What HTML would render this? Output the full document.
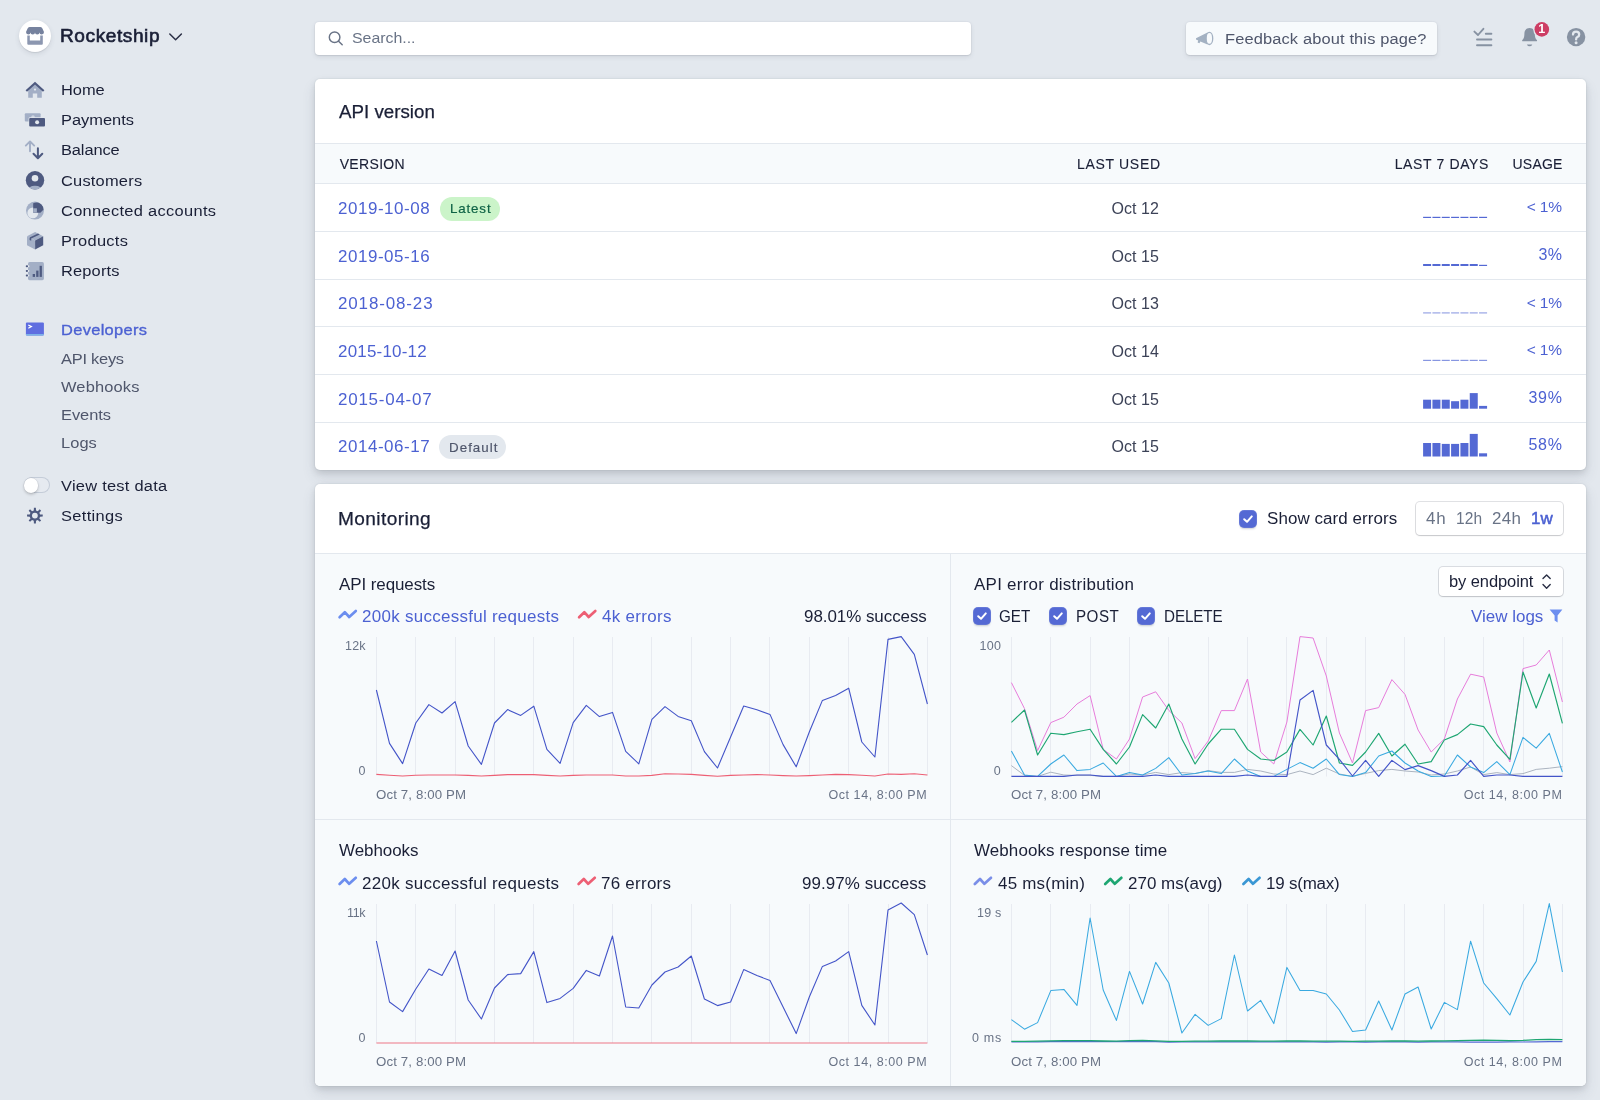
<!DOCTYPE html>
<html lang="en"><head><meta charset="utf-8"><title>Developers – Rocketship – Stripe</title>
<style>
*{box-sizing:border-box;margin:0;padding:0}
html,body{width:1600px;height:1100px;overflow:hidden;background:#e3e8ee;font-family:"Liberation Sans",sans-serif;-webkit-font-smoothing:antialiased}
.abs{position:absolute}
.overlay{position:absolute;left:0;top:0;pointer-events:none}
.t{position:absolute;white-space:nowrap;height:20px;line-height:20px}
.card{position:absolute;background:#fff;border-radius:5px;box-shadow:0 0 0 1px rgba(60,66,87,.04),0 7px 14px 0 rgba(60,66,87,.12),0 3px 6px 0 rgba(0,0,0,.10)}
.hl{position:absolute;height:1px;background:#e3e8ee}
.vl{position:absolute;width:1px;background:#e3e8ee}
.cb{position:absolute;width:16px;height:16px;border-radius:4px;background:#5469d4;box-shadow:0 0 0 1px rgba(84,105,212,.9),0 1.5px 2px rgba(60,66,87,.25)}
.cb svg{position:absolute;left:0;top:0}
.btn{position:absolute;background:#fff;border-radius:4px;box-shadow:0 0 0 1px rgba(60,66,87,.16),0 1px 1.5px rgba(0,0,0,.12)}
.pill{position:absolute;border-radius:12px}
</style></head><body>
<div class="abs" style="left:19px;top:20px;width:32px;height:32px;border-radius:16px;background:#fff;box-shadow:0 2px 5px rgba(60,66,87,.12),0 1px 1px rgba(0,0,0,.08)"></div>
<div class="abs" style="left:23.6px;top:477.4px;width:26.2px;height:15.8px;border-radius:8px;background:#e6eaf0;box-shadow:inset 0 0 0 1px #c4ccd8"></div>
<div class="abs" style="left:24px;top:478.2px;width:14.4px;height:14.4px;border-radius:8px;background:#fff;box-shadow:0 1.5px 3px rgba(0,0,0,.2),0 0 0 .5px rgba(60,66,87,.10)"></div>
<div class="abs" style="left:315px;top:22px;width:656px;height:33px;border-radius:4px;background:#fff;box-shadow:0 0 0 1px rgba(60,66,87,.03),0 2px 5px rgba(60,66,87,.10),0 1px 1.5px rgba(0,0,0,.08)"></div>
<div class="abs" style="left:1186px;top:22px;width:251px;height:33px;border-radius:4px;background:#f7fafc;box-shadow:0 0 0 1px rgba(60,66,87,.03),0 2px 5px rgba(60,66,87,.10),0 1px 1.5px rgba(0,0,0,.08)"></div>
<div class="card" style="left:315px;top:78.6px;width:1270.6px;height:391px;overflow:hidden">
<div class="abs" style="left:0;top:64.6px;width:1271px;height:41px;background:#f7fafc"></div>
<div class="hl" style="left:0;top:64.4px;width:1271px"></div>
<div class="hl" style="left:0;top:104.6px;width:1271px"></div>
<div class="hl" style="left:0;top:152.3px;width:1271px"></div>
<div class="hl" style="left:0;top:200.1px;width:1271px"></div>
<div class="hl" style="left:0;top:247.8px;width:1271px"></div>
<div class="hl" style="left:0;top:295.6px;width:1271px"></div>
<div class="hl" style="left:0;top:343.4px;width:1271px"></div>
</div>
<div class="pill" style="left:439.7px;top:196.9px;width:60.4px;height:23.8px;background:#cbf4c9"></div>
<div class="pill" style="left:438.6px;top:435.2px;width:67.2px;height:23.8px;background:#e3e8ee"></div>
<div class="card" style="left:315px;top:483.6px;width:1270.6px;height:602.4px;overflow:hidden">
<div class="abs" style="left:0;top:69px;width:1271px;height:534px;background:#f7fafc"></div>
<div class="hl" style="left:0;top:69px;width:1271px"></div>
<div class="hl" style="left:0;top:335.2px;width:1271px"></div>
<div class="vl" style="left:634.6px;top:69px;height:534px"></div>
</div>
<div class="btn" style="left:1415.5px;top:502px;width:147.5px;height:32.6px"></div>
<div class="btn" style="left:1439px;top:567px;width:124px;height:28.8px"></div>
<div class="cb" style="left:1240.4px;top:510.6px"><svg width="16" height="16" viewBox="0 0 16 16"><polyline points="4.2,8.2 7,10.8 11.8,5.4" fill="none" stroke="#fff" stroke-width="2" stroke-linecap="round" stroke-linejoin="round"/></svg></div>
<div class="cb" style="left:974px;top:608.3px"><svg width="16" height="16" viewBox="0 0 16 16"><polyline points="4.2,8.2 7,10.8 11.8,5.4" fill="none" stroke="#fff" stroke-width="2" stroke-linecap="round" stroke-linejoin="round"/></svg></div>
<div class="cb" style="left:1049.8px;top:608.3px"><svg width="16" height="16" viewBox="0 0 16 16"><polyline points="4.2,8.2 7,10.8 11.8,5.4" fill="none" stroke="#fff" stroke-width="2" stroke-linecap="round" stroke-linejoin="round"/></svg></div>
<div class="cb" style="left:1138.2px;top:608.3px"><svg width="16" height="16" viewBox="0 0 16 16"><polyline points="4.2,8.2 7,10.8 11.8,5.4" fill="none" stroke="#fff" stroke-width="2" stroke-linecap="round" stroke-linejoin="round"/></svg></div>
<svg class="overlay" width="1600" height="1100" viewBox="0 0 1600 1100">
<line x1="376.5" y1="637" x2="376.5" y2="775.5" stroke="#e8ebf1" stroke-width="1"/>
<line x1="415.5" y1="637" x2="415.5" y2="775.5" stroke="#e8ebf1" stroke-width="1"/>
<line x1="455.5" y1="637" x2="455.5" y2="775.5" stroke="#e8ebf1" stroke-width="1"/>
<line x1="494.5" y1="637" x2="494.5" y2="775.5" stroke="#e8ebf1" stroke-width="1"/>
<line x1="533.5" y1="637" x2="533.5" y2="775.5" stroke="#e8ebf1" stroke-width="1"/>
<line x1="573.5" y1="637" x2="573.5" y2="775.5" stroke="#e8ebf1" stroke-width="1"/>
<line x1="612.5" y1="637" x2="612.5" y2="775.5" stroke="#e8ebf1" stroke-width="1"/>
<line x1="651.5" y1="637" x2="651.5" y2="775.5" stroke="#e8ebf1" stroke-width="1"/>
<line x1="691.5" y1="637" x2="691.5" y2="775.5" stroke="#e8ebf1" stroke-width="1"/>
<line x1="730.5" y1="637" x2="730.5" y2="775.5" stroke="#e8ebf1" stroke-width="1"/>
<line x1="769.5" y1="637" x2="769.5" y2="775.5" stroke="#e8ebf1" stroke-width="1"/>
<line x1="809.5" y1="637" x2="809.5" y2="775.5" stroke="#e8ebf1" stroke-width="1"/>
<line x1="848.5" y1="637" x2="848.5" y2="775.5" stroke="#e8ebf1" stroke-width="1"/>
<line x1="888.5" y1="637" x2="888.5" y2="775.5" stroke="#e8ebf1" stroke-width="1"/>
<line x1="927.5" y1="637" x2="927.5" y2="775.5" stroke="#e8ebf1" stroke-width="1"/>
<line x1="1011.5" y1="637" x2="1011.5" y2="776.5" stroke="#e8ebf1" stroke-width="1"/>
<line x1="1050.5" y1="637" x2="1050.5" y2="776.5" stroke="#e8ebf1" stroke-width="1"/>
<line x1="1090.5" y1="637" x2="1090.5" y2="776.5" stroke="#e8ebf1" stroke-width="1"/>
<line x1="1129.5" y1="637" x2="1129.5" y2="776.5" stroke="#e8ebf1" stroke-width="1"/>
<line x1="1168.5" y1="637" x2="1168.5" y2="776.5" stroke="#e8ebf1" stroke-width="1"/>
<line x1="1208.5" y1="637" x2="1208.5" y2="776.5" stroke="#e8ebf1" stroke-width="1"/>
<line x1="1247.5" y1="637" x2="1247.5" y2="776.5" stroke="#e8ebf1" stroke-width="1"/>
<line x1="1286.5" y1="637" x2="1286.5" y2="776.5" stroke="#e8ebf1" stroke-width="1"/>
<line x1="1326.5" y1="637" x2="1326.5" y2="776.5" stroke="#e8ebf1" stroke-width="1"/>
<line x1="1365.5" y1="637" x2="1365.5" y2="776.5" stroke="#e8ebf1" stroke-width="1"/>
<line x1="1404.5" y1="637" x2="1404.5" y2="776.5" stroke="#e8ebf1" stroke-width="1"/>
<line x1="1444.5" y1="637" x2="1444.5" y2="776.5" stroke="#e8ebf1" stroke-width="1"/>
<line x1="1483.5" y1="637" x2="1483.5" y2="776.5" stroke="#e8ebf1" stroke-width="1"/>
<line x1="1523.5" y1="637" x2="1523.5" y2="776.5" stroke="#e8ebf1" stroke-width="1"/>
<line x1="1562.5" y1="637" x2="1562.5" y2="776.5" stroke="#e8ebf1" stroke-width="1"/>
<line x1="376.5" y1="904" x2="376.5" y2="1043" stroke="#e8ebf1" stroke-width="1"/>
<line x1="415.5" y1="904" x2="415.5" y2="1043" stroke="#e8ebf1" stroke-width="1"/>
<line x1="455.5" y1="904" x2="455.5" y2="1043" stroke="#e8ebf1" stroke-width="1"/>
<line x1="494.5" y1="904" x2="494.5" y2="1043" stroke="#e8ebf1" stroke-width="1"/>
<line x1="533.5" y1="904" x2="533.5" y2="1043" stroke="#e8ebf1" stroke-width="1"/>
<line x1="573.5" y1="904" x2="573.5" y2="1043" stroke="#e8ebf1" stroke-width="1"/>
<line x1="612.5" y1="904" x2="612.5" y2="1043" stroke="#e8ebf1" stroke-width="1"/>
<line x1="651.5" y1="904" x2="651.5" y2="1043" stroke="#e8ebf1" stroke-width="1"/>
<line x1="691.5" y1="904" x2="691.5" y2="1043" stroke="#e8ebf1" stroke-width="1"/>
<line x1="730.5" y1="904" x2="730.5" y2="1043" stroke="#e8ebf1" stroke-width="1"/>
<line x1="769.5" y1="904" x2="769.5" y2="1043" stroke="#e8ebf1" stroke-width="1"/>
<line x1="809.5" y1="904" x2="809.5" y2="1043" stroke="#e8ebf1" stroke-width="1"/>
<line x1="848.5" y1="904" x2="848.5" y2="1043" stroke="#e8ebf1" stroke-width="1"/>
<line x1="888.5" y1="904" x2="888.5" y2="1043" stroke="#e8ebf1" stroke-width="1"/>
<line x1="927.5" y1="904" x2="927.5" y2="1043" stroke="#e8ebf1" stroke-width="1"/>
<line x1="1011.5" y1="904" x2="1011.5" y2="1041.5" stroke="#e8ebf1" stroke-width="1"/>
<line x1="1050.5" y1="904" x2="1050.5" y2="1041.5" stroke="#e8ebf1" stroke-width="1"/>
<line x1="1090.5" y1="904" x2="1090.5" y2="1041.5" stroke="#e8ebf1" stroke-width="1"/>
<line x1="1129.5" y1="904" x2="1129.5" y2="1041.5" stroke="#e8ebf1" stroke-width="1"/>
<line x1="1168.5" y1="904" x2="1168.5" y2="1041.5" stroke="#e8ebf1" stroke-width="1"/>
<line x1="1208.5" y1="904" x2="1208.5" y2="1041.5" stroke="#e8ebf1" stroke-width="1"/>
<line x1="1247.5" y1="904" x2="1247.5" y2="1041.5" stroke="#e8ebf1" stroke-width="1"/>
<line x1="1286.5" y1="904" x2="1286.5" y2="1041.5" stroke="#e8ebf1" stroke-width="1"/>
<line x1="1326.5" y1="904" x2="1326.5" y2="1041.5" stroke="#e8ebf1" stroke-width="1"/>
<line x1="1365.5" y1="904" x2="1365.5" y2="1041.5" stroke="#e8ebf1" stroke-width="1"/>
<line x1="1404.5" y1="904" x2="1404.5" y2="1041.5" stroke="#e8ebf1" stroke-width="1"/>
<line x1="1444.5" y1="904" x2="1444.5" y2="1041.5" stroke="#e8ebf1" stroke-width="1"/>
<line x1="1483.5" y1="904" x2="1483.5" y2="1041.5" stroke="#e8ebf1" stroke-width="1"/>
<line x1="1523.5" y1="904" x2="1523.5" y2="1041.5" stroke="#e8ebf1" stroke-width="1"/>
<line x1="1562.5" y1="904" x2="1562.5" y2="1041.5" stroke="#e8ebf1" stroke-width="1"/>
<polyline points="376.4,690.0 389.5,743.4 402.6,763.6 415.8,723.0 428.9,704.6 442.0,713.0 455.1,701.6 468.2,746.0 481.4,764.4 494.5,723.0 507.6,709.6 520.7,715.4 533.8,706.2 546.9,749.4 560.1,763.4 573.2,722.6 586.3,705.4 599.4,716.6 612.5,712.4 625.7,751.4 638.8,763.8 651.9,719.4 665.0,706.6 678.1,716.4 691.3,720.8 704.4,751.6 717.5,768.0 730.6,737.0 743.7,706.0 756.9,709.8 770.0,714.4 783.1,744.6 796.2,766.8 809.3,732.0 822.4,700.4 835.6,695.4 848.7,688.2 861.8,742.0 874.9,757.0 888.0,639.4 901.2,636.6 914.3,654.4 927.4,704.0" fill="none" stroke="#4354c8" stroke-width="1.1" stroke-linejoin="round" />
<polyline points="376.4,774.4 389.5,775.2 402.6,776.0 415.8,775.2 428.9,775.0 442.0,775.0 455.1,775.0 468.2,775.4 481.4,776.0 494.5,775.4 507.6,774.6 520.7,774.6 533.8,774.6 546.9,775.4 560.1,776.0 573.2,775.4 586.3,775.0 599.4,775.0 612.5,775.0 625.7,776.0 638.8,776.0 651.9,775.4 665.0,773.8 678.1,774.0 691.3,774.4 704.4,775.4 717.5,776.2 730.6,775.4 743.7,775.0 756.9,774.6 770.0,775.0 783.1,775.6 796.2,776.0 809.3,775.6 822.4,775.0 835.6,774.4 848.7,774.6 861.8,775.2 874.9,776.0 888.0,774.0 901.2,774.4 914.3,773.8 927.4,775.0" fill="none" stroke="#ed5f74" stroke-width="1.1" stroke-linejoin="round" />
<polyline points="1011.4,765.6 1024.5,775.4 1037.6,776.4 1050.8,772.2 1063.9,775.0 1077.0,775.4 1090.1,775.4 1103.2,776.4 1116.4,776.4 1129.5,774.0 1142.6,775.0 1155.7,772.4 1168.8,774.6 1181.9,772.6 1195.1,773.6 1208.2,770.6 1221.3,772.4 1234.4,772.4 1247.5,769.4 1260.7,771.0 1273.8,774.0 1286.9,774.6 1300.0,771.0 1313.1,774.6 1326.3,768.2 1339.4,774.0 1352.5,776.4 1365.6,773.4 1378.7,770.6 1391.9,769.4 1405.0,771.0 1418.1,772.0 1431.2,775.0 1444.3,774.0 1457.4,771.0 1470.6,767.0 1483.7,774.6 1496.8,772.6 1509.9,774.6 1523.0,773.6 1536.2,769.4 1549.3,768.2 1562.4,766.6" fill="none" stroke="#a3acb9" stroke-width="0.9" stroke-linejoin="round" />
<polyline points="1011.4,682.6 1024.5,708.6 1037.6,750.6 1050.8,722.6 1063.9,717.2 1077.0,704.0 1090.1,695.6 1103.2,749.4 1116.4,759.0 1129.5,739.0 1142.6,697.0 1155.7,691.8 1168.8,710.4 1181.9,723.0 1195.1,758.6 1208.2,741.0 1221.3,710.6 1234.4,710.6 1247.5,679.0 1260.7,752.0 1273.8,764.0 1286.9,722.0 1300.0,636.6 1313.1,638.0 1326.3,676.0 1339.4,733.0 1352.5,763.0 1365.6,710.6 1378.7,707.6 1391.9,679.6 1405.0,694.4 1418.1,730.0 1431.2,752.0 1444.3,739.0 1457.4,699.0 1470.6,674.2 1483.7,677.0 1496.8,733.0 1509.9,762.0 1523.0,668.6 1536.2,665.0 1549.3,650.0 1562.4,702.0" fill="none" stroke="#e77ddb" stroke-width="1.0" stroke-linejoin="round" />
<polyline points="1011.4,722.4 1024.5,710.0 1037.6,755.0 1050.8,733.2 1063.9,734.6 1077.0,731.8 1090.1,729.2 1103.2,749.4 1116.4,764.0 1129.5,747.0 1142.6,714.6 1155.7,728.0 1168.8,704.0 1181.9,739.0 1195.1,764.0 1208.2,744.0 1221.3,729.2 1234.4,729.2 1247.5,749.4 1260.7,759.0 1273.8,760.4 1286.9,752.0 1300.0,729.4 1313.1,745.0 1326.3,716.0 1339.4,763.0 1352.5,765.4 1365.6,752.0 1378.7,733.4 1391.9,756.0 1405.0,744.2 1418.1,764.0 1431.2,761.6 1444.3,740.0 1457.4,734.6 1470.6,724.0 1483.7,726.6 1496.8,745.0 1509.9,759.4 1523.0,672.0 1536.2,708.0 1549.3,674.0 1562.4,723.4" fill="none" stroke="#1ea672" stroke-width="1.15" stroke-linejoin="round" />
<polyline points="1011.4,751.0 1024.5,775.0 1037.6,776.4 1050.8,764.0 1063.9,755.0 1077.0,770.6 1090.1,769.4 1103.2,763.0 1116.4,776.4 1129.5,772.4 1142.6,775.0 1155.7,768.4 1168.8,757.6 1181.9,775.0 1195.1,773.6 1208.2,771.0 1221.3,773.6 1234.4,759.0 1247.5,771.0 1260.7,776.4 1273.8,776.4 1286.9,769.4 1300.0,762.6 1313.1,768.2 1326.3,759.0 1339.4,774.6 1352.5,776.4 1365.6,772.6 1378.7,756.0 1391.9,751.0 1405.0,763.0 1418.1,771.0 1431.2,776.4 1444.3,776.0 1457.4,755.0 1470.6,767.0 1483.7,772.6 1496.8,761.6 1509.9,774.6 1523.0,737.4 1536.2,748.2 1549.3,733.4 1562.4,772.0" fill="none" stroke="#39a9e0" stroke-width="1.05" stroke-linejoin="round" />
<polyline points="1011.4,776.4 1024.5,776.4 1037.6,776.4 1050.8,776.4 1063.9,776.4 1077.0,775.0 1090.1,775.0 1103.2,776.4 1116.4,776.4 1129.5,776.4 1142.6,776.4 1155.7,775.0 1168.8,776.4 1181.9,776.4 1195.1,776.4 1208.2,776.4 1221.3,776.4 1234.4,776.4 1247.5,775.0 1260.7,776.4 1273.8,776.4 1286.9,776.4 1300.0,700.0 1313.1,690.4 1326.3,745.0 1339.4,759.4 1352.5,776.0 1365.6,760.4 1378.7,776.4 1391.9,760.4 1405.0,769.6 1418.1,765.6 1431.2,770.6 1444.3,776.4 1457.4,775.0 1470.6,760.4 1483.7,776.4 1496.8,775.0 1509.9,775.0 1523.0,776.4 1536.2,776.4 1549.3,776.4 1562.4,776.4" fill="none" stroke="#4354c8" stroke-width="1.15" stroke-linejoin="round" />
<polyline points="376.4,941.0 389.5,1002.0 402.6,1011.6 415.8,989.0 428.9,969.0 442.0,975.4 455.1,951.0 468.2,1000.0 481.4,1019.0 494.5,988.0 507.6,974.6 520.7,973.6 533.8,951.6 546.9,1002.6 560.1,998.4 573.2,988.4 586.3,970.4 599.4,976.0 612.5,936.0 625.7,1007.0 638.8,1008.0 651.9,985.0 665.0,972.0 678.1,967.0 691.3,956.0 704.4,999.0 717.5,1005.6 730.6,1002.0 743.7,969.6 756.9,975.6 770.0,980.4 783.1,1007.0 796.2,1033.6 809.3,997.0 822.4,966.4 835.6,961.0 848.7,951.6 861.8,1005.4 874.9,1025.0 888.0,910.0 901.2,903.0 914.3,914.6 927.4,955.0" fill="none" stroke="#4354c8" stroke-width="1.1" stroke-linejoin="round" />
<polyline points="376.4,1043.0 389.5,1043.0 402.6,1043.0 415.8,1043.0 428.9,1043.0 442.0,1043.0 455.1,1043.0 468.2,1043.0 481.4,1043.0 494.5,1043.0 507.6,1043.0 520.7,1043.0 533.8,1043.0 546.9,1043.0 560.1,1043.0 573.2,1043.0 586.3,1043.0 599.4,1043.0 612.5,1043.0 625.7,1043.0 638.8,1043.0 651.9,1043.0 665.0,1043.0 678.1,1043.0 691.3,1043.0 704.4,1043.0 717.5,1043.0 730.6,1043.0 743.7,1043.0 756.9,1043.0 770.0,1043.0 783.1,1043.0 796.2,1043.0 809.3,1043.0 822.4,1043.0 835.6,1043.0 848.7,1043.0 861.8,1043.0 874.9,1043.0 888.0,1043.0 901.2,1043.0 914.3,1043.0 927.4,1043.0" fill="none" stroke="#ee7686" stroke-width="1.2" stroke-linejoin="round" />
<polyline points="1011.4,1019.6 1024.5,1029.2 1037.6,1022.6 1050.8,990.6 1063.9,989.4 1077.0,1005.4 1090.1,918.0 1103.2,990.0 1116.4,1020.4 1129.5,971.4 1142.6,1004.0 1155.7,962.4 1168.8,983.0 1181.9,1033.0 1195.1,1014.4 1208.2,1025.4 1221.3,1018.6 1234.4,955.0 1247.5,1011.0 1260.7,1000.4 1273.8,1023.6 1286.9,967.4 1300.0,990.4 1313.1,990.4 1326.3,994.0 1339.4,1010.0 1352.5,1031.4 1365.6,1030.0 1378.7,1001.0 1391.9,1030.0 1405.0,994.0 1418.1,987.0 1431.2,1029.0 1444.3,1002.4 1457.4,1009.6 1470.6,941.2 1483.7,983.0 1496.8,998.6 1509.9,1015.0 1523.0,982.0 1536.2,961.4 1549.3,903.6 1562.4,972.0" fill="none" stroke="#39a9e0" stroke-width="1.05" stroke-linejoin="round" />
<polyline points="1011.4,1041.8 1024.5,1041.8 1037.6,1041.8 1050.8,1041.6 1063.9,1041.6 1077.0,1041.6 1090.1,1041.6 1103.2,1041.6 1116.4,1041.6 1129.5,1041.6 1142.6,1041.6 1155.7,1041.6 1168.8,1042.2 1181.9,1042.0 1195.1,1041.8 1208.2,1041.8 1221.3,1041.8 1234.4,1041.8 1247.5,1041.8 1260.7,1041.8 1273.8,1041.8 1286.9,1041.8 1300.0,1041.8 1313.1,1041.8 1326.3,1042.2 1339.4,1041.8 1352.5,1041.8 1365.6,1042.2 1378.7,1041.8 1391.9,1041.8 1405.0,1041.8 1418.1,1042.2 1431.2,1041.8 1444.3,1041.8 1457.4,1041.8 1470.6,1042.2 1483.7,1042.2 1496.8,1042.2 1509.9,1041.8 1523.0,1042.0 1536.2,1041.8 1549.3,1041.6 1562.4,1041.6" fill="none" stroke="#5469d4" stroke-width="1.2" stroke-linejoin="round" />
<polyline points="1011.4,1041.4 1024.5,1041.4 1037.6,1041.2 1050.8,1040.8 1063.9,1040.6 1077.0,1040.6 1090.1,1040.6 1103.2,1041.0 1116.4,1041.2 1129.5,1040.6 1142.6,1040.4 1155.7,1040.8 1168.8,1041.4 1181.9,1041.4 1195.1,1041.2 1208.2,1041.2 1221.3,1041.0 1234.4,1041.0 1247.5,1041.0 1260.7,1041.2 1273.8,1041.2 1286.9,1041.0 1300.0,1041.0 1313.1,1041.2 1326.3,1041.2 1339.4,1041.2 1352.5,1041.4 1365.6,1041.2 1378.7,1041.2 1391.9,1041.0 1405.0,1041.0 1418.1,1041.2 1431.2,1041.0 1444.3,1040.8 1457.4,1040.6 1470.6,1040.4 1483.7,1040.2 1496.8,1040.4 1509.9,1040.6 1523.0,1040.4 1536.2,1039.6 1549.3,1039.4 1562.4,1039.6" fill="none" stroke="#1ea672" stroke-width="1.3" stroke-linejoin="round" />
<rect x="1423.10" y="216.80" width="8" height="1.20" fill="#5469d4" opacity="1"/>
<rect x="1432.43" y="216.80" width="8" height="1.20" fill="#5469d4" opacity="1"/>
<rect x="1441.76" y="216.80" width="8" height="1.20" fill="#5469d4" opacity="1"/>
<rect x="1451.09" y="216.80" width="8" height="1.20" fill="#5469d4" opacity="1"/>
<rect x="1460.42" y="216.80" width="8" height="1.20" fill="#5469d4" opacity="1"/>
<rect x="1469.75" y="216.80" width="8" height="1.20" fill="#5469d4" opacity="1"/>
<rect x="1479.08" y="216.80" width="8" height="1.20" fill="#5469d4" opacity="1"/>
<rect x="1423.10" y="264.00" width="8" height="2.00" fill="#5469d4" opacity="1"/>
<rect x="1432.43" y="264.00" width="8" height="2.00" fill="#5469d4" opacity="1"/>
<rect x="1441.76" y="264.00" width="8" height="2.00" fill="#5469d4" opacity="1"/>
<rect x="1451.09" y="264.00" width="8" height="2.00" fill="#5469d4" opacity="1"/>
<rect x="1460.42" y="264.00" width="8" height="2.00" fill="#5469d4" opacity="1"/>
<rect x="1469.75" y="264.00" width="8" height="2.00" fill="#5469d4" opacity="1"/>
<rect x="1479.08" y="264.80" width="8" height="1.20" fill="#5469d4" opacity="1"/>
<rect x="1423.10" y="312.30" width="8" height="1.20" fill="#5469d4" opacity="0.6"/>
<rect x="1432.43" y="312.30" width="8" height="1.20" fill="#5469d4" opacity="0.6"/>
<rect x="1441.76" y="312.30" width="8" height="1.20" fill="#5469d4" opacity="0.6"/>
<rect x="1451.09" y="312.30" width="8" height="1.20" fill="#5469d4" opacity="0.6"/>
<rect x="1460.42" y="312.30" width="8" height="1.20" fill="#5469d4" opacity="0.6"/>
<rect x="1469.75" y="312.30" width="8" height="1.20" fill="#5469d4" opacity="0.6"/>
<rect x="1479.08" y="312.30" width="8" height="1.20" fill="#5469d4" opacity="0.6"/>
<rect x="1423.10" y="359.80" width="8" height="1.20" fill="#5469d4" opacity="0.7"/>
<rect x="1432.43" y="359.80" width="8" height="1.20" fill="#5469d4" opacity="0.7"/>
<rect x="1441.76" y="359.80" width="8" height="1.20" fill="#5469d4" opacity="0.7"/>
<rect x="1451.09" y="359.80" width="8" height="1.20" fill="#5469d4" opacity="0.7"/>
<rect x="1460.42" y="359.80" width="8" height="1.20" fill="#5469d4" opacity="0.7"/>
<rect x="1469.75" y="359.80" width="8" height="1.20" fill="#5469d4" opacity="0.7"/>
<rect x="1479.08" y="359.80" width="8" height="1.20" fill="#5469d4" opacity="0.7"/>
<rect x="1423.10" y="399.70" width="8" height="9.00" fill="#5469d4" opacity="1"/>
<rect x="1432.43" y="399.70" width="8" height="9.00" fill="#5469d4" opacity="1"/>
<rect x="1441.76" y="399.70" width="8" height="9.00" fill="#5469d4" opacity="1"/>
<rect x="1451.09" y="401.20" width="8" height="7.50" fill="#5469d4" opacity="1"/>
<rect x="1460.42" y="399.70" width="8" height="9.00" fill="#5469d4" opacity="1"/>
<rect x="1469.75" y="393.10" width="8" height="15.60" fill="#5469d4" opacity="1"/>
<rect x="1479.08" y="405.90" width="8" height="2.80" fill="#5469d4" opacity="1"/>
<rect x="1423.10" y="443.00" width="8" height="13.50" fill="#5469d4" opacity="1"/>
<rect x="1432.43" y="443.00" width="8" height="13.50" fill="#5469d4" opacity="1"/>
<rect x="1441.76" y="443.90" width="8" height="12.60" fill="#5469d4" opacity="1"/>
<rect x="1451.09" y="443.90" width="8" height="12.60" fill="#5469d4" opacity="1"/>
<rect x="1460.42" y="443.00" width="8" height="13.50" fill="#5469d4" opacity="1"/>
<rect x="1469.75" y="433.90" width="8" height="22.60" fill="#5469d4" opacity="1"/>
<rect x="1479.08" y="453.30" width="8" height="3.20" fill="#5469d4" opacity="1"/>
</svg>
<svg class="overlay" width="1600" height="1100" viewBox="0 0 1600 1100">
<defs><clipPath id="cc"><circle cx="35" cy="180.3" r="9.2"/></clipPath><clipPath id="ca"><circle cx="35" cy="210.6" r="9"/></clipPath></defs>
<path d="M27.6,28.4 Q28,26.9 29.6,26.9 H40.4 Q42,26.9 42.4,28.4 L44,32 Q44,34.4 41.75,34.4 Q39.5,34.4 39.5,32.4 Q39.5,34.4 37.25,34.4 Q35,34.4 35,32.4 Q35,34.4 32.75,34.4 Q30.5,34.4 30.5,32.4 Q30.5,34.4 28.25,34.4 Q26,34.4 26,32Z" fill="#76829e"/><path d="M27.3,35.6 H29.8 V40.6 H40.2 V35.6 H42.8 V43.8 Q42.8,44.8 41.8,44.8 H28.3 Q27.3,44.8 27.3,43.8Z" fill="#8c97b0"/>
<polyline points="169.8,34 175.6,39.8 181.4,34" fill="none" stroke="#2a2f45" stroke-width="1.5" stroke-linecap="round" stroke-linejoin="round"/>
<path d="M28.2,97.8 V89.6 L35,84.2 L41.8,89.6 V97.8 H37.2 V93.4 H32.8 V97.8Z" fill="#a3afc6"/>
<circle cx="35" cy="89.6" r="1.1" fill="#e3e8ee"/>
<polyline points="26.3,91 35,83.2 43.7,91" fill="none" stroke="#4e5a80" stroke-width="2.1" stroke-linejoin="miter"/>
<rect x="24.8" y="113.2" width="15.8" height="8.4" rx="1" fill="#a3afc6"/>
<circle cx="33" cy="117" r="1.8" fill="#e3e8ee" opacity="0.7"/>
<rect x="28.6" y="117.3" width="17" height="9.8" rx="1.4" fill="#e3e8ee"/>
<rect x="29.2" y="117.9" width="15.8" height="8.6" rx="1" fill="#4e5a80"/>
<circle cx="37.1" cy="122.2" r="2" fill="#e3e8ee"/>
<g fill="none" stroke-linecap="round" stroke-linejoin="round"><path d="M30,151.2 V141.6 M25.8,145.6 L30,141.4 L34.2,145.6" stroke="#a3afc6" stroke-width="1.9"/><path d="M37.9,148.2 V158 M33.5,153.8 L37.9,158.2 L42.3,153.8" stroke="#4e5a80" stroke-width="2"/></g>
<circle cx="35" cy="180.3" r="9.2" fill="#4e5a80"/>
<ellipse cx="35" cy="190.6" rx="7.6" ry="4.8" fill="#a3afc6" clip-path="url(#cc)"/>
<circle cx="35" cy="178.2" r="3.3" fill="#e3e8ee"/>
<circle cx="35" cy="210.6" r="9" fill="#a3afc6"/>
<circle cx="32.8" cy="212.9" r="5.4" fill="#e3e8ee"/>
<path d="M33.2,203.2 A7.2,7.2 0 0 1 43.6,209.6 L40.4,212.8 H33.2Z" fill="#4e5a80" clip-path="url(#ca)"/>
<rect x="33.2" y="208.3" width="3.7" height="4.3" fill="#a3afc6"/>
<polygon points="35.1,232.1 43.2,236.2 35.1,240.4 27,236.2" fill="#a3afc6"/>
<polygon points="27,236.2 35.1,240.4 35.1,249.4 27,245.2" fill="#a3afc6"/>
<polygon points="43.2,236.2 35.1,240.4 35.1,249.4 43.2,245.2" fill="#4e5a80"/>
<polygon points="29.6,237.6 38,233.6 39.8,234.5 31.2,238.6 31.2,240.8 29.6,240" fill="#4e5a80"/>
<rect x="28" y="262.1" width="15.9" height="18.1" rx="1.6" fill="#a3afc6"/>
<rect x="25.8" y="265.2" width="3.6" height="2" rx="0.8" fill="#e3e8ee"/><rect x="25.8" y="265.2" width="2.2" height="2" rx="0.8" fill="#4e5a80"/>
<rect x="25.8" y="269.9" width="3.6" height="2" rx="0.8" fill="#e3e8ee"/><rect x="25.8" y="269.9" width="2.2" height="2" rx="0.8" fill="#4e5a80"/>
<rect x="25.8" y="274.6" width="3.6" height="2" rx="0.8" fill="#e3e8ee"/><rect x="25.8" y="274.6" width="2.2" height="2" rx="0.8" fill="#4e5a80"/>
<rect x="32.7" y="274" width="2.3" height="2.9" fill="#4e5a80"/><rect x="36.2" y="270.6" width="2.3" height="6.3" fill="#4e5a80"/><rect x="39.6" y="265.8" width="2.3" height="11.1" fill="#4e5a80"/>
<rect x="25.9" y="322.5" width="18" height="13" rx="1" fill="#5f6ee0"/>
<path d="M25.9,334 H43.9 V334.5 Q43.9,335.5 42.9,335.5 H26.9 Q25.9,335.5 25.9,334.5Z" fill="#7db4e8"/>
<polyline points="28.3,325 31.4,326.6 28.3,328.2" fill="none" stroke="#fff" stroke-width="1.2"/>
<path d="M33.78,510.42 L33.91,507.76 L35.89,507.76 L36.02,510.42 L37.77,511.15 L39.74,509.36 L41.14,510.76 L39.35,512.73 L40.08,514.48 L42.74,514.61 L42.74,516.59 L40.08,516.72 L39.35,518.47 L41.14,520.44 L39.74,521.84 L37.77,520.05 L36.02,520.78 L35.89,523.44 L33.91,523.44 L33.78,520.78 L32.03,520.05 L30.06,521.84 L28.66,520.44 L30.45,518.47 L29.72,516.72 L27.06,516.59 L27.06,514.61 L29.72,514.48 L30.45,512.73 L28.66,510.76 L30.06,509.36 L32.03,511.15Z M37.80,515.60 A2.9,2.9 0 1,0 32.00,515.60 A2.9,2.9 0 1,0 37.80,515.60Z" fill="#4e5a80" fill-rule="evenodd"/>
<g fill="none" stroke="#697386" stroke-width="1.45" stroke-linecap="round"><circle cx="334.6" cy="37.2" r="5.3"/><path d="M338.6,41.2 L342.2,44.8"/></g>
<path d="M1196,38.2 L1207.5,32.6 V44.4 L1200.4,41.6 L1199.4,43.2 L1197.6,42.4 L1198.2,40.6 L1196,39.6Z" fill="#a3b1c2"/><ellipse cx="1209.4" cy="38.4" rx="3.3" ry="6.1" fill="#f7fafc" stroke="#a3b1c2" stroke-width="1.3"/>
<g fill="none" stroke="#8792a2" stroke-width="1.9" stroke-linecap="round" stroke-linejoin="round"><path d="M1485.8,33.8 H1491.4 M1477,39.5 H1491.4 M1477,45.2 H1491.4"/><path d="M1474.4,31.6 L1478,35 L1483.4,28.8"/></g>
<path d="M1529.6,28 C1533.4,28 1534.8,31 1534.8,34 C1534.8,37.6 1535.8,39 1536.9,40 Q1537.4,41.3 1536.2,41.3 H1523 Q1521.8,41.3 1522.3,40 C1523.4,39 1524.4,37.6 1524.4,34 C1524.4,31 1525.8,28 1529.6,28Z" fill="#8792a2"/><path d="M1526.9,44.4 H1532.3 Q1531.6,46.3 1529.6,46.3 Q1527.6,46.3 1526.9,44.4Z" fill="#8792a2"/>
<circle cx="1541.8" cy="29.4" r="8.5" fill="#e3e8ee"/><circle cx="1541.8" cy="29.4" r="7.3" fill="#cd3d64"/>
<circle cx="1576.1" cy="37.1" r="9.2" fill="#8792a2"/>
<path d="M1573,34.6 Q1573,31.6 1576.1,31.6 Q1579.2,31.6 1579.2,34.4 Q1579.2,36.2 1577.4,37 Q1576.1,37.6 1576.1,39.4" fill="none" stroke="#e3e8ee" stroke-width="2.3" stroke-linecap="round"/><circle cx="1576.1" cy="42.8" r="1.5" fill="#e3e8ee"/>
<polyline points="339.6,617.2 344.8,612.2 349.2,617.0 355.8,611.0" fill="none" stroke="#6c8eef" stroke-width="2.7" stroke-linecap="round" stroke-linejoin="round"/>
<polyline points="579.0999999999999,617.2 584.3,612.2 588.6999999999999,617.0 595.3,611.0" fill="none" stroke="#ed5f74" stroke-width="2.7" stroke-linecap="round" stroke-linejoin="round"/>
<polyline points="339.6,884.0 344.8,879.0 349.2,883.8 355.8,877.8" fill="none" stroke="#6c8eef" stroke-width="2.7" stroke-linecap="round" stroke-linejoin="round"/>
<polyline points="578.5999999999999,884.0 583.8,879.0 588.1999999999999,883.8 594.8,877.8" fill="none" stroke="#ed5f74" stroke-width="2.7" stroke-linecap="round" stroke-linejoin="round"/>
<polyline points="974.8,884.0 980,879.0 984.4,883.8 991,877.8" fill="none" stroke="#7a8ee8" stroke-width="2.7" stroke-linecap="round" stroke-linejoin="round"/>
<polyline points="1105.2,884.0 1110.4,879.0 1114.8000000000002,883.8 1121.4,877.8" fill="none" stroke="#1ea672" stroke-width="2.7" stroke-linecap="round" stroke-linejoin="round"/>
<polyline points="1243.3999999999999,884.0 1248.6,879.0 1253.0,883.8 1259.6,877.8" fill="none" stroke="#3a97d4" stroke-width="2.7" stroke-linecap="round" stroke-linejoin="round"/>
<path d="M1549.6,609.6 H1562.4 L1557.6,615.6 V622.4 L1554.6,620.6 V615.6Z" fill="#6c8eef"/>
<g fill="none" stroke="#2a2f45" stroke-width="1.4" stroke-linecap="round" stroke-linejoin="round"><path d="M1543,578.6 L1546.6,575 L1550.2,578.6 M1543,584.6 L1546.6,588.2 L1550.2,584.6"/></g>
</svg>
<div id="txt" style="position:absolute;left:0;top:0;width:1600px;height:1100px;will-change:transform">
<div class="t" id="t0" style="top:26.0px;font-size:18px;font-weight:400;color:#1a1f36;letter-spacing:0.536px;left:60.0px;transform-origin:0 50%;transform:scaleX(1.06);-webkit-text-stroke:0.6px #1a1f36;">Rocketship</div>
<div class="t" id="t1" style="top:79.8px;font-size:15.5px;font-weight:400;color:#1a1f36;letter-spacing:-0.044px;left:60.7px;transform-origin:0 50%;transform:scaleX(1.06);">Home</div>
<div class="t" id="t2" style="top:110.0px;font-size:15.5px;font-weight:400;color:#1a1f36;letter-spacing:-0.021px;left:60.7px;transform-origin:0 50%;transform:scaleX(1.06);">Payments</div>
<div class="t" id="t3" style="top:140.2px;font-size:15.5px;font-weight:400;color:#1a1f36;letter-spacing:-0.106px;left:60.7px;transform-origin:0 50%;transform:scaleX(1.06);">Balance</div>
<div class="t" id="t4" style="top:170.5px;font-size:15.5px;font-weight:400;color:#1a1f36;letter-spacing:0.196px;left:60.7px;transform-origin:0 50%;transform:scaleX(1.06);">Customers</div>
<div class="t" id="t5" style="top:200.7px;font-size:15.5px;font-weight:400;color:#1a1f36;letter-spacing:0.288px;left:60.7px;transform-origin:0 50%;transform:scaleX(1.06);">Connected accounts</div>
<div class="t" id="t6" style="top:231.0px;font-size:15.5px;font-weight:400;color:#1a1f36;letter-spacing:0.277px;left:60.7px;transform-origin:0 50%;transform:scaleX(1.06);">Products</div>
<div class="t" id="t7" style="top:261.2px;font-size:15.5px;font-weight:400;color:#1a1f36;letter-spacing:0.151px;left:60.7px;transform-origin:0 50%;transform:scaleX(1.06);">Reports</div>
<div class="t" id="t8" style="top:319.5px;font-size:15.5px;font-weight:400;color:#4c61d2;letter-spacing:0.303px;left:60.7px;transform-origin:0 50%;transform:scaleX(1.06);-webkit-text-stroke:0.35px #4c61d2;">Developers</div>
<div class="t" id="t9" style="top:348.6px;font-size:15.5px;font-weight:400;color:#4f566b;letter-spacing:-0.235px;left:60.7px;transform-origin:0 50%;transform:scaleX(1.06);">API keys</div>
<div class="t" id="t10" style="top:376.6px;font-size:15.5px;font-weight:400;color:#4f566b;letter-spacing:0.144px;left:60.7px;transform-origin:0 50%;transform:scaleX(1.06);">Webhooks</div>
<div class="t" id="t11" style="top:404.6px;font-size:15.5px;font-weight:400;color:#4f566b;letter-spacing:-0.044px;left:60.7px;transform-origin:0 50%;transform:scaleX(1.06);">Events</div>
<div class="t" id="t12" style="top:432.6px;font-size:15.5px;font-weight:400;color:#4f566b;letter-spacing:0.050px;left:60.7px;transform-origin:0 50%;transform:scaleX(1.06);">Logs</div>
<div class="t" id="t13" style="top:475.6px;font-size:15.5px;font-weight:400;color:#1a1f36;letter-spacing:0.238px;left:60.7px;transform-origin:0 50%;transform:scaleX(1.06);">View test data</div>
<div class="t" id="t14" style="top:505.8px;font-size:15.5px;font-weight:400;color:#1a1f36;letter-spacing:0.313px;left:60.7px;transform-origin:0 50%;transform:scaleX(1.06);">Settings</div>
<div class="t" id="t15" style="top:28.2px;font-size:15px;font-weight:400;color:#697386;letter-spacing:-0.016px;left:352.2px;transform-origin:0 50%;transform:scaleX(1.06);">Search...</div>
<div class="t" id="t16" style="top:28.6px;font-size:15.5px;font-weight:400;color:#4f566b;letter-spacing:0.125px;left:1224.6px;transform-origin:0 50%;transform:scaleX(1.06);">Feedback about this page?</div>
<div class="t" id="t17" style="top:102.0px;font-size:18px;font-weight:400;color:#1a1f36;letter-spacing:0.007px;left:338.6px;transform-origin:0 50%;transform:scaleX(1.04);-webkit-text-stroke:0.25px #1a1f36;">API version</div>
<div class="t" id="t18" style="top:154.2px;font-size:14px;font-weight:400;color:#1a1f36;letter-spacing:0.331px;left:339.7px;transform-origin:0 50%;transform:scaleX(1);-webkit-text-stroke:0.12px #1a1f36;">VERSION</div>
<div class="t" id="t19" style="top:154.2px;font-size:14px;font-weight:400;color:#1a1f36;letter-spacing:0.682px;right:439.3px;transform-origin:100% 50%;transform:scaleX(1);-webkit-text-stroke:0.12px #1a1f36;">LAST USED</div>
<div class="t" id="t20" style="top:154.2px;font-size:14px;font-weight:400;color:#1a1f36;letter-spacing:0.628px;right:111.0px;transform-origin:100% 50%;transform:scaleX(1);-webkit-text-stroke:0.12px #1a1f36;">LAST 7 DAYS</div>
<div class="t" id="t21" style="top:154.2px;font-size:14px;font-weight:400;color:#1a1f36;letter-spacing:0.246px;right:37.3px;transform-origin:100% 50%;transform:scaleX(1);-webkit-text-stroke:0.12px #1a1f36;">USAGE</div>
<div class="t" id="t22" style="top:198.9px;font-size:16px;font-weight:400;color:#4c61d2;letter-spacing:0.508px;left:338.4px;transform-origin:0 50%;transform:scaleX(1.06);">2019-10-08</div>
<div class="t" id="t23" style="top:199.1px;font-size:16px;font-weight:400;color:#3c4257;letter-spacing:0.012px;right:441.2px;transform-origin:100% 50%;transform:scaleX(1.0);">Oct 12</div>
<div class="t" id="t24" style="top:197.3px;font-size:15.5px;font-weight:400;color:#4c61d2;letter-spacing:-0.122px;right:38.1px;transform-origin:100% 50%;transform:scaleX(1.0);">&lt; 1%</div>
<div class="t" id="t25" style="top:246.6px;font-size:16px;font-weight:400;color:#4c61d2;letter-spacing:0.508px;left:338.4px;transform-origin:0 50%;transform:scaleX(1.06);">2019-05-16</div>
<div class="t" id="t26" style="top:246.8px;font-size:16px;font-weight:400;color:#3c4257;letter-spacing:0.012px;right:441.2px;transform-origin:100% 50%;transform:scaleX(1.0);">Oct 15</div>
<div class="t" id="t27" style="top:244.9px;font-size:16px;font-weight:400;color:#4c61d2;letter-spacing:0.375px;right:37.6px;transform-origin:100% 50%;transform:scaleX(1.0);">3%</div>
<div class="t" id="t28" style="top:294.2px;font-size:16px;font-weight:400;color:#4c61d2;letter-spacing:0.822px;left:338.4px;transform-origin:0 50%;transform:scaleX(1.06);">2018-08-23</div>
<div class="t" id="t29" style="top:294.4px;font-size:16px;font-weight:400;color:#3c4257;letter-spacing:0.012px;right:441.2px;transform-origin:100% 50%;transform:scaleX(1.0);">Oct 13</div>
<div class="t" id="t30" style="top:292.5px;font-size:15.5px;font-weight:400;color:#4c61d2;letter-spacing:-0.122px;right:38.1px;transform-origin:100% 50%;transform:scaleX(1.0);">&lt; 1%</div>
<div class="t" id="t31" style="top:341.9px;font-size:16px;font-weight:400;color:#4c61d2;letter-spacing:0.193px;left:338.4px;transform-origin:0 50%;transform:scaleX(1.06);">2015-10-12</div>
<div class="t" id="t32" style="top:342.1px;font-size:16px;font-weight:400;color:#3c4257;letter-spacing:0.012px;right:441.2px;transform-origin:100% 50%;transform:scaleX(1.0);">Oct 14</div>
<div class="t" id="t33" style="top:340.1px;font-size:15.5px;font-weight:400;color:#4c61d2;letter-spacing:-0.122px;right:38.1px;transform-origin:100% 50%;transform:scaleX(1.0);">&lt; 1%</div>
<div class="t" id="t34" style="top:389.5px;font-size:16px;font-weight:400;color:#4c61d2;letter-spacing:0.718px;left:338.4px;transform-origin:0 50%;transform:scaleX(1.06);">2015-04-07</div>
<div class="t" id="t35" style="top:389.7px;font-size:16px;font-weight:400;color:#3c4257;letter-spacing:0.012px;right:441.2px;transform-origin:100% 50%;transform:scaleX(1.0);">Oct 15</div>
<div class="t" id="t36" style="top:387.7px;font-size:16px;font-weight:400;color:#4c61d2;letter-spacing:0.734px;right:37.3px;transform-origin:100% 50%;transform:scaleX(1.0);">39%</div>
<div class="t" id="t37" style="top:437.1px;font-size:16px;font-weight:400;color:#4c61d2;letter-spacing:0.508px;left:338.4px;transform-origin:0 50%;transform:scaleX(1.06);">2014-06-17</div>
<div class="t" id="t38" style="top:437.3px;font-size:16px;font-weight:400;color:#3c4257;letter-spacing:0.012px;right:441.2px;transform-origin:100% 50%;transform:scaleX(1.0);">Oct 15</div>
<div class="t" id="t39" style="top:435.3px;font-size:16px;font-weight:400;color:#4c61d2;letter-spacing:0.734px;right:37.3px;transform-origin:100% 50%;transform:scaleX(1.0);">58%</div>
<div class="t" id="t40" style="top:199.2px;font-size:12.6px;font-weight:400;color:#0e6245;letter-spacing:0.798px;left:450.0px;transform-origin:0 50%;transform:scaleX(1.06);-webkit-text-stroke:0.18px #0e6245;">Latest</div>
<div class="t" id="t41" style="top:437.5px;font-size:12.6px;font-weight:400;color:#4f566b;letter-spacing:0.975px;left:448.5px;transform-origin:0 50%;transform:scaleX(1.06);-webkit-text-stroke:0.18px #4f566b;">Default</div>
<div class="t" id="t42" style="top:509.2px;font-size:18px;font-weight:400;color:#1a1f36;letter-spacing:0.378px;left:338.3px;transform-origin:0 50%;transform:scaleX(1.06);-webkit-text-stroke:0.25px #1a1f36;">Monitoring</div>
<div class="t" id="t43" style="top:509.3px;font-size:16px;font-weight:400;color:#1a1f36;letter-spacing:0.067px;left:1266.7px;transform-origin:0 50%;transform:scaleX(1.06);">Show card errors</div>
<div class="t" id="t44" style="top:509.3px;font-size:16px;font-weight:400;color:#697386;letter-spacing:0.788px;left:1425.6px;transform-origin:0 50%;transform:scaleX(1.06);">4h</div>
<div class="t" id="t45" style="top:509.3px;font-size:16px;font-weight:400;color:#697386;letter-spacing:0.102px;left:1455.7px;transform-origin:0 50%;transform:scaleX(0.97);">12h</div>
<div class="t" id="t46" style="top:509.3px;font-size:16px;font-weight:400;color:#697386;letter-spacing:0.328px;left:1492.2px;transform-origin:0 50%;transform:scaleX(1.06);">24h</div>
<div class="t" id="t47" style="top:509.3px;font-size:16px;font-weight:400;color:#4c61d2;letter-spacing:0.019px;left:1531.0px;transform-origin:0 50%;transform:scaleX(1.06);-webkit-text-stroke:0.5px #4c61d2;">1w</div>
<div class="t" id="t48" style="top:572.3px;font-size:16px;font-weight:400;color:#1a1f36;letter-spacing:-0.079px;left:1448.6px;transform-origin:0 50%;transform:scaleX(1.03);">by endpoint</div>
<div class="t" id="t49" style="top:607.3px;font-size:16px;font-weight:400;color:#4c61d2;letter-spacing:0.002px;left:1470.6px;transform-origin:0 50%;transform:scaleX(1.06);">View logs</div>
<div class="t" id="t50" style="top:574.5px;font-size:16px;font-weight:400;color:#1a1f36;letter-spacing:-0.078px;left:338.8px;transform-origin:0 50%;transform:scaleX(1.06);">API requests</div>
<div class="t" id="t51" style="top:574.5px;font-size:16px;font-weight:400;color:#1a1f36;letter-spacing:0.243px;left:973.8px;transform-origin:0 50%;transform:scaleX(1.06);">API error distribution</div>
<div class="t" id="t52" style="top:841.3px;font-size:16px;font-weight:400;color:#1a1f36;letter-spacing:-0.045px;left:338.8px;transform-origin:0 50%;transform:scaleX(1.06);">Webhooks</div>
<div class="t" id="t53" style="top:841.3px;font-size:16px;font-weight:400;color:#1a1f36;letter-spacing:0.096px;left:973.8px;transform-origin:0 50%;transform:scaleX(1.06);">Webhooks response time</div>
<div class="t" id="t54" style="top:607.2px;font-size:16px;font-weight:400;color:#4c61d2;letter-spacing:0.269px;left:361.8px;transform-origin:0 50%;transform:scaleX(1.06);">200k successful requests</div>
<div class="t" id="t55" style="top:607.2px;font-size:16px;font-weight:400;color:#4c61d2;letter-spacing:0.305px;left:601.8px;transform-origin:0 50%;transform:scaleX(1.06);">4k errors</div>
<div class="t" id="t56" style="top:607.2px;font-size:16px;font-weight:400;color:#1a1f36;letter-spacing:-0.051px;right:673.7px;transform-origin:100% 50%;transform:scaleX(1.06);">98.01% success</div>
<div class="t" id="t57" style="top:874.0px;font-size:16px;font-weight:400;color:#1a1f36;letter-spacing:0.269px;left:361.8px;transform-origin:0 50%;transform:scaleX(1.06);">220k successful requests</div>
<div class="t" id="t58" style="top:874.0px;font-size:16px;font-weight:400;color:#1a1f36;letter-spacing:0.251px;left:600.8px;transform-origin:0 50%;transform:scaleX(1.06);">76 errors</div>
<div class="t" id="t59" style="top:874.0px;font-size:16px;font-weight:400;color:#1a1f36;letter-spacing:0.065px;right:673.5px;transform-origin:100% 50%;transform:scaleX(1.06);">99.97% success</div>
<div class="t" id="t60" style="top:607.2px;font-size:16px;font-weight:400;color:#1a1f36;letter-spacing:-0.024px;left:999.3px;transform-origin:0 50%;transform:scaleX(0.95);">GET</div>
<div class="t" id="t61" style="top:607.2px;font-size:16px;font-weight:400;color:#1a1f36;letter-spacing:0.497px;left:1075.5px;transform-origin:0 50%;transform:scaleX(0.95);">POST</div>
<div class="t" id="t62" style="top:607.2px;font-size:16px;font-weight:400;color:#1a1f36;letter-spacing:-0.092px;left:1163.8px;transform-origin:0 50%;transform:scaleX(0.95);">DELETE</div>
<div class="t" id="t63" style="top:874.0px;font-size:16px;font-weight:400;color:#1a1f36;letter-spacing:0.208px;left:997.5px;transform-origin:0 50%;transform:scaleX(1.06);">45 ms(min)</div>
<div class="t" id="t64" style="top:874.0px;font-size:16px;font-weight:400;color:#1a1f36;letter-spacing:0.023px;left:1128.0px;transform-origin:0 50%;transform:scaleX(1.06);">270 ms(avg)</div>
<div class="t" id="t65" style="top:874.0px;font-size:16px;font-weight:400;color:#1a1f36;letter-spacing:-0.200px;left:1266.3px;transform-origin:0 50%;transform:scaleX(1.06);">19 s(max)</div>
<div class="t" id="t66" style="top:635.8px;font-size:12.5px;font-weight:400;color:#697386;letter-spacing:0.222px;right:1234.2px;transform-origin:100% 50%;transform:scaleX(1);">12k</div>
<div class="t" id="t67" style="top:761.2px;font-size:12.5px;font-weight:400;color:#697386;letter-spacing:0.247px;right:1234.2px;transform-origin:100% 50%;transform:scaleX(1);">0</div>
<div class="t" id="t68" style="top:785.1px;font-size:12.5px;font-weight:400;color:#697386;letter-spacing:0.118px;left:375.6px;transform-origin:0 50%;transform:scaleX(1.06);">Oct 7, 8:00 PM</div>
<div class="t" id="t69" style="top:785.1px;font-size:12.5px;font-weight:400;color:#697386;letter-spacing:0.562px;right:672.8px;transform-origin:100% 50%;transform:scaleX(1);">Oct 14, 8:00 PM</div>
<div class="t" id="t70" style="top:635.8px;font-size:12.5px;font-weight:400;color:#697386;letter-spacing:0.270px;right:598.9px;transform-origin:100% 50%;transform:scaleX(1);">100</div>
<div class="t" id="t71" style="top:761.2px;font-size:12.5px;font-weight:400;color:#697386;letter-spacing:0.247px;right:599.0px;transform-origin:100% 50%;transform:scaleX(1);">0</div>
<div class="t" id="t72" style="top:785.1px;font-size:12.5px;font-weight:400;color:#697386;letter-spacing:0.118px;left:1011.0px;transform-origin:0 50%;transform:scaleX(1.06);">Oct 7, 8:00 PM</div>
<div class="t" id="t73" style="top:785.1px;font-size:12.5px;font-weight:400;color:#697386;letter-spacing:0.562px;right:37.6px;transform-origin:100% 50%;transform:scaleX(1);">Oct 14, 8:00 PM</div>
<div class="t" id="t74" style="top:902.6px;font-size:12.5px;font-weight:400;color:#697386;letter-spacing:-0.317px;right:1234.7px;transform-origin:100% 50%;transform:scaleX(1);">11k</div>
<div class="t" id="t75" style="top:1027.8px;font-size:12.5px;font-weight:400;color:#697386;letter-spacing:0.247px;right:1234.2px;transform-origin:100% 50%;transform:scaleX(1);">0</div>
<div class="t" id="t76" style="top:1051.9px;font-size:12.5px;font-weight:400;color:#697386;letter-spacing:0.118px;left:375.6px;transform-origin:0 50%;transform:scaleX(1.06);">Oct 7, 8:00 PM</div>
<div class="t" id="t77" style="top:1051.9px;font-size:12.5px;font-weight:400;color:#697386;letter-spacing:0.562px;right:672.8px;transform-origin:100% 50%;transform:scaleX(1);">Oct 14, 8:00 PM</div>
<div class="t" id="t78" style="top:902.6px;font-size:12.5px;font-weight:400;color:#697386;letter-spacing:0.186px;right:598.6px;transform-origin:100% 50%;transform:scaleX(1);">19 s</div>
<div class="t" id="t79" style="top:1027.8px;font-size:12.5px;font-weight:400;color:#697386;letter-spacing:0.702px;right:598.1px;transform-origin:100% 50%;transform:scaleX(1);">0 ms</div>
<div class="t" id="t80" style="top:1051.9px;font-size:12.5px;font-weight:400;color:#697386;letter-spacing:0.118px;left:1011.0px;transform-origin:0 50%;transform:scaleX(1.06);">Oct 7, 8:00 PM</div>
<div class="t" id="t81" style="top:1051.9px;font-size:12.5px;font-weight:400;color:#697386;letter-spacing:0.562px;right:37.6px;transform-origin:100% 50%;transform:scaleX(1);">Oct 14, 8:00 PM</div>
</div>
<div class="t" style="left:1537.3px;top:19.4px;font-size:12.5px;font-weight:700;color:#fff;width:9px;text-align:center">1</div>
</body></html>
